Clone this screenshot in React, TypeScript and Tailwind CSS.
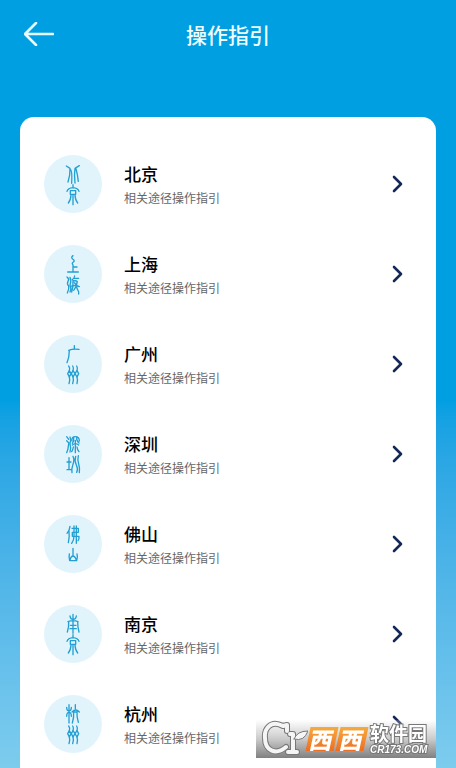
import type { ReactNode } from 'react';

type City = { name: string; seal: ReactNode };

const jing = (
  <path d="M99 104v9M81 124q3-10 18-11q15 1 18 11M91 122h16v11h-16zM99 133v31M93 135q-1 16-8 24M105 135q1 16 8 24" />
);

const zhou = (
  <>
    <path d="M86 108q5 6 2 14M98 108q4 6 1 14M110 108q4 6 1 14M88 141q3 9-1 20M99 141q3 9-1 20M111 141q3 9 0 20" />
    <path d="M88 122l-5 9 5 10 5-10zM99 122l-5 9 5 10 6-10zM111 122l-6 9 6 10 5-10z" />
  </>
);

const cities: City[] = [
  {
    name: '北京',
    seal: (
      <>
        <path d="M79 48l11 7q1 19-6 41M91 58q6 2 4 42M118 47l-13 8q-3 19 0 44M108 56q5 20 7 38" />
        {jing}
      </>
    ),
  },
  {
    name: '上海',
    seal: (
      <>
        <path d="M99 47q-7 5-1 10q8 5 2 9q-6 4-1 9v21M99 81h12M83 96h32" />
        <path d="M81 111q8 6 3 13q-4 8 2 14q2 10-4 21M90 112q5 10 0 23q5 12 0 21M104 108q-1 6-7 11M101 115h15M99 121q1 20-4 35M99 123q10-2 13 2q-2 16-11 26M103 128l7 7M95 138q12-4 23 2M111 126q-3 18 3 25q3 4 2 11" />
      </>
    ),
  },
  {
    name: '广州',
    seal: (
      <>
        <path d="M103 47v10M86 61q12-5 31-3M88 61q0 22-7 37" />
        {zhou}
      </>
    ),
  },
  {
    name: '深圳',
    seal: (
      <>
        <path d="M80 50l6 8M80 62l6 6M86 71q-1 16-6 27M90 51q4 9 0 20q4 15 0 25M96 63q-2-13 10-13t12 13M101 53q2 10-4 17M110 53q-1 10 7 16M106 61v37M97 75q9-8 19 0M100 81q-1 9-5 14M111 81q1 9 6 14" />
        <path d="M87 113v36M81 126h12M81 149h13M99 109q5 10 0 24t-3 25M107 109q-4 14 2 26t1 22M115 107q-3 13 1 25t2 26" />
      </>
    ),
  },
  {
    name: '佛山',
    seal: (
      <>
        <path d="M90 49q-1 12-9 21M87 62q2 18-2 36M96 55h19v12h-18v12h20q1 9-3 13M102 48v30q0 12-7 22M109 48v52" />
        <path d="M99 115v23M88 132q-2 9 1 20h21q4-10 1-20M90 152q1-12 9-14q8 2 10 14" />
      </>
    ),
  },
  {
    name: '南京',
    seal: (
      <>
        <path d="M99 43v57M90 48q1 10 9 10q9 0 10-10M84 65q15-6 30 0M86 65q1 17-4 31M113 65q0 17 4 31M91 76h17M90 86h19" />
        {jing}
      </>
    ),
  },
  {
    name: '杭州',
    seal: (
      <>
        <path d="M87 44v55M80 52q0 11 7 11t7-11M80 79q0-12 7-12t7 12M106 44v12M96 66q11-12 22 0M101 64q1 20-4 35M111 64q-1 20 4 33M101 66h10" />
        {zhou}
      </>
    ),
  },
];

function CityRow({ name, seal }: City) {
  return (
    <li>
      <button type="button" className="flex w-full items-center text-left">
        <span className="flex size-[58px] shrink-0 rounded-full bg-[#e1f4fc]">
          <svg
            viewBox="12 15 174 174"
            className="size-full"
            fill="none"
            stroke="#239fd2"
            strokeWidth="4"
            strokeLinecap="round"
            strokeLinejoin="round"
            aria-hidden="true"
          >
            {seal}
          </svg>
        </span>
        <span className="ml-[22px] flex flex-1 flex-col gap-[2px] pt-[2px]">
          <span className="text-[17px] leading-6 font-medium text-black">{name}</span>
          <span className="text-xs leading-5 text-[#666666]">相关途径操作指引</span>
        </span>
        <svg
          viewBox="0 0 12 18"
          className="mr-[9px] h-[18px] w-3"
          fill="none"
          stroke="#132759"
          strokeWidth="2.6"
          strokeLinecap="round"
          strokeLinejoin="round"
          aria-hidden="true"
        >
          <path d="M3 2l7 7-7 7" />
        </svg>
      </button>
    </li>
  );
}

function Watermark() {
  return (
    <div className="fixed right-5 bottom-[10px] flex h-[38px] w-[180px] items-center bg-linear-to-b from-white/20 via-[#b9b9b9]/75 to-[#808080]">
      <svg viewBox="0 0 52 38" className="h-[38px] w-[52px] shrink-0" fill="none" strokeLinecap="round" strokeLinejoin="round" aria-hidden="true">
        <g stroke="#777777" strokeWidth="6">
          <path d="M31 11V5l-4 1C14-1 8 10 9 18c0 12 10 18 21 9" />
          <path d="M34 14h3v18M32 32h9" />
        </g>
        <g stroke="#f5f5f5" strokeWidth="4">
          <path d="M31 11V5l-4 1C14-1 8 10 9 18c0 12 10 18 21 9" />
          <path d="M34 14h3v18M32 32h9" />
        </g>
        <path d="M38 19q3-8 14-8q-4 11-14 8" fill="#f5f5f5" stroke="#777777" />
      </svg>
      <div className="flex gap-[2px] text-[23px] leading-6 font-black text-white">
        <span className="flex h-6 w-[28px] -skew-x-12 items-center justify-center bg-linear-to-b from-[#f5ab3d] to-[#ee6c22]">
          西
        </span>
        <span className="flex h-6 w-[28px] -skew-x-12 items-center justify-center bg-linear-to-b from-[#f5ab3d] to-[#ee6c22]">
          西
        </span>
      </div>
      <div className="ml-1 flex flex-col items-start whitespace-nowrap text-white [-webkit-text-stroke:2px_#777777] [paint-order:stroke_fill]">
        <span className="text-[19px] leading-[22px] font-bold">软件园</span>
        <span className="font-['Liberation_Sans',sans-serif] text-[10px] leading-3 font-bold italic">CR173.COM</span>
      </div>
    </div>
  );
}

export default function App() {
  return (
    <div className="flex min-h-screen flex-col bg-linear-to-b from-[#009fe2] from-52% to-[#7dccee] font-['Noto_Sans_CJK_SC',sans-serif]">
      <header className="grid h-[68px] grid-cols-[64px_1fr_64px] items-center">
        <button type="button" aria-label="返回" className="pl-6">
          <svg
            viewBox="0 0 30 24"
            className="h-6 w-[30px]"
            fill="none"
            stroke="#e5fbff"
            strokeWidth="2.6"
            strokeLinecap="round"
            strokeLinejoin="round"
            aria-hidden="true"
          >
            <path d="M12 1L1 12l11 11M1 12h28" />
          </svg>
        </button>
        <h1 className="text-center text-[21px] leading-8 font-medium text-[#f0fdff]">操作指引</h1>
      </header>
      <main className="mx-5 mt-[49px] flex-1 rounded-t-[14px] bg-white px-6 pt-[38px] pb-[15px]">
        <ul className="flex flex-col gap-8">
          {cities.map((city) => (
            <CityRow key={city.name} {...city} />
          ))}
        </ul>
      </main>
      <Watermark />
    </div>
  );
}
